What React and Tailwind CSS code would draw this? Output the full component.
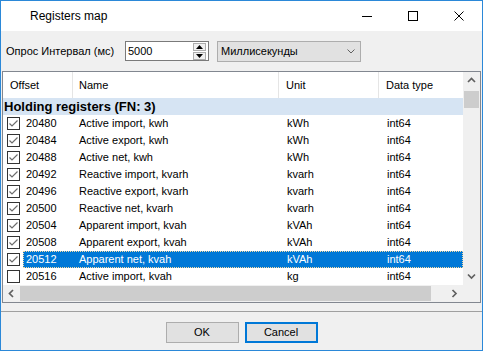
import { useState } from 'react';

const rows = [
  { offset: '20480', name: 'Active import, kwh', unit: 'kWh', type: 'int64', checked: true },
  { offset: '20484', name: 'Active export, kwh', unit: 'kWh', type: 'int64', checked: true },
  { offset: '20488', name: 'Active net, kwh', unit: 'kWh', type: 'int64', checked: true },
  { offset: '20492', name: 'Reactive import, kvarh', unit: 'kvarh', type: 'int64', checked: true },
  { offset: '20496', name: 'Reactive export, kvarh', unit: 'kvarh', type: 'int64', checked: true },
  { offset: '20500', name: 'Reactive net, kvarh', unit: 'kvarh', type: 'int64', checked: true },
  { offset: '20504', name: 'Apparent import, kvah', unit: 'kVAh', type: 'int64', checked: true },
  { offset: '20508', name: 'Apparent export, kvah', unit: 'kVAh', type: 'int64', checked: true },
  { offset: '20512', name: 'Apparent net, kvah', unit: 'kVAh', type: 'int64', checked: true },
  { offset: '20516', name: 'Active import, kvah', unit: 'kg', type: 'int64', checked: false },
];

function Chevron({ dir }) {
  const points = {
    up: '1,5 4.5,1.5 8,5',
    down: '1,1.5 4.5,5 8,1.5',
    left: '5,1 1.5,4.5 5,8',
    right: '1.5,1 5,4.5 1.5,8',
  };
  const horizontal = dir === 'left' || dir === 'right';
  return (
    <svg width={horizontal ? 7 : 9} height={horizontal ? 9 : 7} viewBox={horizontal ? '0 0 7 9' : '0 0 9 7'}>
      <polyline points={points[dir]} fill="none" stroke="#606060" strokeWidth="1.7" />
    </svg>
  );
}

function CheckBox({ checked }) {
  return (
    <span className="flex h-[13px] w-[13px] items-center justify-center border border-[#333333] bg-white">
      {checked && (
        <svg width="11" height="11" viewBox="0 0 11 11">
          <polyline points="1.5,5.5 4,8 9.5,2.5" fill="none" stroke="#6d6d6d" strokeWidth="1.2" />
        </svg>
      )}
    </span>
  );
}

function TitleBar() {
  return (
    <div className="flex h-[30px] items-center bg-white">
      <div className="flex-1 pl-[29px] text-[12px] text-black">Registers map</div>
      <div className="flex h-full w-[46px] items-center justify-center">
        <div className="h-px w-[10px] bg-black" />
      </div>
      <div className="flex h-full w-[46px] items-center justify-center">
        <div className="h-[10px] w-[10px] border border-black" />
      </div>
      <div className="flex h-full w-[46px] items-center justify-center">
        <svg width="10" height="10" viewBox="0 0 10 10">
          <path d="M0.5 0.5 L9.5 9.5 M9.5 0.5 L0.5 9.5" stroke="#000" strokeWidth="1" />
        </svg>
      </div>
    </div>
  );
}

function Toolbar() {
  return (
    <div className="flex h-[40px] items-center pl-[5px]">
      <span className="w-[119px] text-[11px] text-black">Опрос Интервал (мс)</span>
      <div className="flex h-[20px] w-[84px] items-center border border-[#7a7a7a] bg-white pl-[2px] pr-[2px]">
        <span className="flex-1 text-[11px] text-black">5000</span>
        <div className="flex flex-col gap-px">
          <div className="flex h-[8px] w-[13px] items-center justify-center border border-[#adadad] bg-[#f0f0f0]">
            <svg width="7" height="4" viewBox="0 0 7 4"><polygon points="0,4 3.5,0 7,4" fill="#000" /></svg>
          </div>
          <div className="flex h-[8px] w-[13px] items-center justify-center border border-[#adadad] bg-[#f0f0f0]">
            <svg width="7" height="4" viewBox="0 0 7 4"><polygon points="0,0 3.5,4 7,0" fill="#000" /></svg>
          </div>
        </div>
      </div>
      <div className="ml-[8px] flex h-[21px] w-[144px] items-center border border-[#adadad] bg-[#e1e1e1] pl-[3px] pr-[5px]">
        <span className="flex-1 text-[11px] text-black">Миллисекунды</span>
        <svg width="8" height="5" viewBox="0 0 8 5">
          <polyline points="0.5,0.5 4,4 7.5,0.5" fill="none" stroke="#606060" strokeWidth="1" />
        </svg>
      </div>
    </div>
  );
}

function ListView() {
  const [selected, setSelected] = useState('20512');

  return (
    <div className="mx-px flex h-[232px] flex-col border border-[#828790] bg-white">
      <div className="flex flex-1">
        <div className="flex w-[460px] flex-col">
          <div className="flex h-[26px] items-center text-[11px] text-black">
            <div className="h-full w-[70px] border-r border-[#e5e5e5] pl-[7px] leading-[26px]">Offset</div>
            <div className="h-full w-[206px] border-r border-[#e5e5e5] pl-[6px] leading-[26px]">Name</div>
            <div className="h-full w-[100px] border-r border-[#e5e5e5] pl-[7px] leading-[26px]">Unit</div>
            <div className="h-full w-[84px] pl-[7px] leading-[26px]">Data type</div>
          </div>
          <div className="flex h-[17px] items-center bg-[#d6e4f3] pl-[1px] text-[13px] font-bold text-black">
            Holding registers (FN: 3)
          </div>
          {rows.map((row) => {
            const isSelected = row.offset === selected;
            return (
              <div key={row.offset} className="flex h-[17px] items-center text-[11px]" onClick={() => setSelected(row.offset)}>
                <div className="flex w-[20px] items-center pl-[4px]">
                  <CheckBox checked={row.checked} />
                </div>
                <div
                  className={`flex h-full flex-1 items-center ${
                    isSelected ? 'border border-dotted border-[#f6d9a0] bg-[#0078d7] text-white' : 'border border-transparent text-black'
                  }`}
                >
                  <span className="w-[55px] pl-[2px]">{row.offset}</span>
                  <span className="w-[208px]">{row.name}</span>
                  <span className="w-[100px]">{row.unit}</span>
                  <span>{row.type}</span>
                </div>
              </div>
            );
          })}
        </div>
        <div className="flex w-[17px] flex-col items-center bg-[#f0f0f0]">
          <div className="flex h-[17px] w-full items-center justify-center">
            <Chevron dir="up" />
          </div>
          <div className="mt-[2px] h-[17px] w-[15px] bg-[#cdcdcd]" />
          <div className="flex-1" />
          <div className="flex h-[17px] w-full items-center justify-center">
            <Chevron dir="down" />
          </div>
        </div>
      </div>
      <div className="flex h-[17px] bg-[#f0f0f0]">
        <div className="flex w-[17px] items-center justify-center">
          <Chevron dir="left" />
        </div>
        <div className="my-px w-[411px] bg-[#cdcdcd]" />
        <div className="flex-1" />
        <div className="flex w-[17px] items-center justify-center">
          <Chevron dir="right" />
        </div>
        <div className="w-[17px]" />
      </div>
    </div>
  );
}

export default function App() {
  return (
    <div className="flex h-[351px] w-[483px] flex-col border border-[#2b88d8] bg-[#f0f0f0] font-['Liberation_Sans',Arial,sans-serif]">
      <TitleBar />
      <Toolbar />
      <ListView />
      <div className="mt-[8px] border-t border-[#a0a0a0]" />
      <div className="flex justify-center gap-[6px] pt-[10px]">
        <button className="h-[21px] w-[73px] border border-[#adadad] bg-[#e1e1e1] text-[11px] text-black">OK</button>
        <button className="h-[21px] w-[73px] border-2 border-[#0078d7] bg-[#e1e1e1] text-[11px] text-black">Cancel</button>
      </div>
    </div>
  );
}
